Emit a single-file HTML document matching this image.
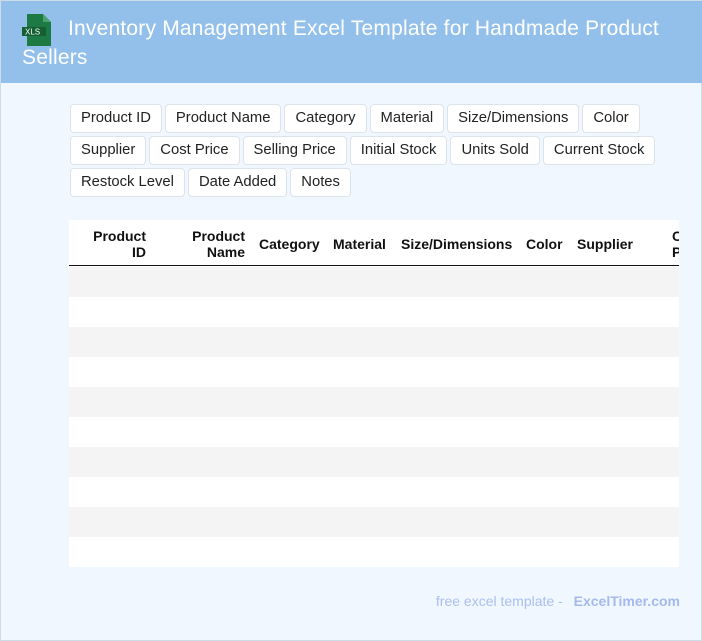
<!DOCTYPE html>
<html><head><meta charset="utf-8"><style>
*{box-sizing:border-box;margin:0;padding:0}
body{width:702px;height:641px;background:#f0f7ff;font-family:"Liberation Sans",sans-serif;position:relative;overflow:hidden;border:1px solid #cfdbe6}
.hdr{position:absolute;left:0;top:0;width:702px;height:82px;background:#92c0eb;}
.hdr h1{position:absolute;left:21px;top:13px;width:660px;font-weight:normal;color:#fff;font-size:21px;letter-spacing:0.2px;line-height:29px;text-indent:46px}
.icon{position:absolute;left:20px;top:13px}
.tags{position:absolute;left:69px;top:103px;width:600px}
.tag{display:inline-block;height:29px;line-height:27px;padding:0 10px;border:1px solid #dde3ea;border-radius:4px;background:#fff;font-size:14.8px;color:#222;margin:0 0 3px 0;float:left;margin-right:3px}
.tbl{position:absolute;left:68px;top:219px;width:610px;height:347px;background:#fff;overflow:hidden}
.th{position:absolute;top:0;height:46px;border-bottom:1.5px solid #111;width:610px}
.th span{position:absolute;font-weight:bold;font-size:14px;color:#111;text-align:right;line-height:16px}
.row{position:absolute;left:0;width:610px;height:30px}
.g{background:#f4f4f4}
.foot{position:absolute;right:21px;top:592px;font-size:14px;color:#aabef0}
.foot b{color:#a6b9ee;margin-left:7px}
</style></head><body>
<div class="hdr">
<svg class="icon" width="32" height="32" viewBox="0 0 32 32"><path d="M6 0h16l8 8v24H6z" fill="#1e7a45"/><path d="M22 0v8h8z" fill="#4aa36f"/><rect x="1" y="13" width="24" height="9" fill="#155f34"/><text x="4" y="20.5" font-size="8" fill="#fff" font-family="Liberation Sans">XLS</text></svg>
<h1>Inventory Management Excel Template for Handmade Product Sellers</h1>
</div>
<div class="tags">
<span class="tag">Product ID</span><span class="tag">Product Name</span><span class="tag">Category</span><span class="tag">Material</span><span class="tag">Size/Dimensions</span><span class="tag">Color</span>
<span class="tag" style="clear:left">Supplier</span><span class="tag">Cost Price</span><span class="tag">Selling Price</span><span class="tag">Initial Stock</span><span class="tag">Units Sold</span><span class="tag">Current Stock</span>
<span class="tag" style="clear:left">Restock Level</span><span class="tag">Date Added</span><span class="tag">Notes</span>
</div>
<div class="tbl">
<div class="th">
<span style="left:22px;top:8px;width:55px">Product<br>ID</span>
<span style="left:120px;top:8px;width:56px">Product<br>Name</span>
<span style="left:190px;top:16px">Category</span>
<span style="left:264px;top:16px">Material</span>
<span style="left:332px;top:16px">Size/Dimensions</span>
<span style="left:457px;top:16px">Color</span>
<span style="left:508px;top:16px">Supplier</span>
<span style="left:603px;top:8px;text-align:left">C<br>P</span>
</div>
<div class="row g" style="top:47px"></div>
<div class="row g" style="top:107px"></div>
<div class="row g" style="top:167px"></div>
<div class="row g" style="top:227px"></div>
<div class="row g" style="top:287px"></div>
</div>
<div class="foot">free excel template - <b>ExcelTimer.com</b></div>
</body></html>
